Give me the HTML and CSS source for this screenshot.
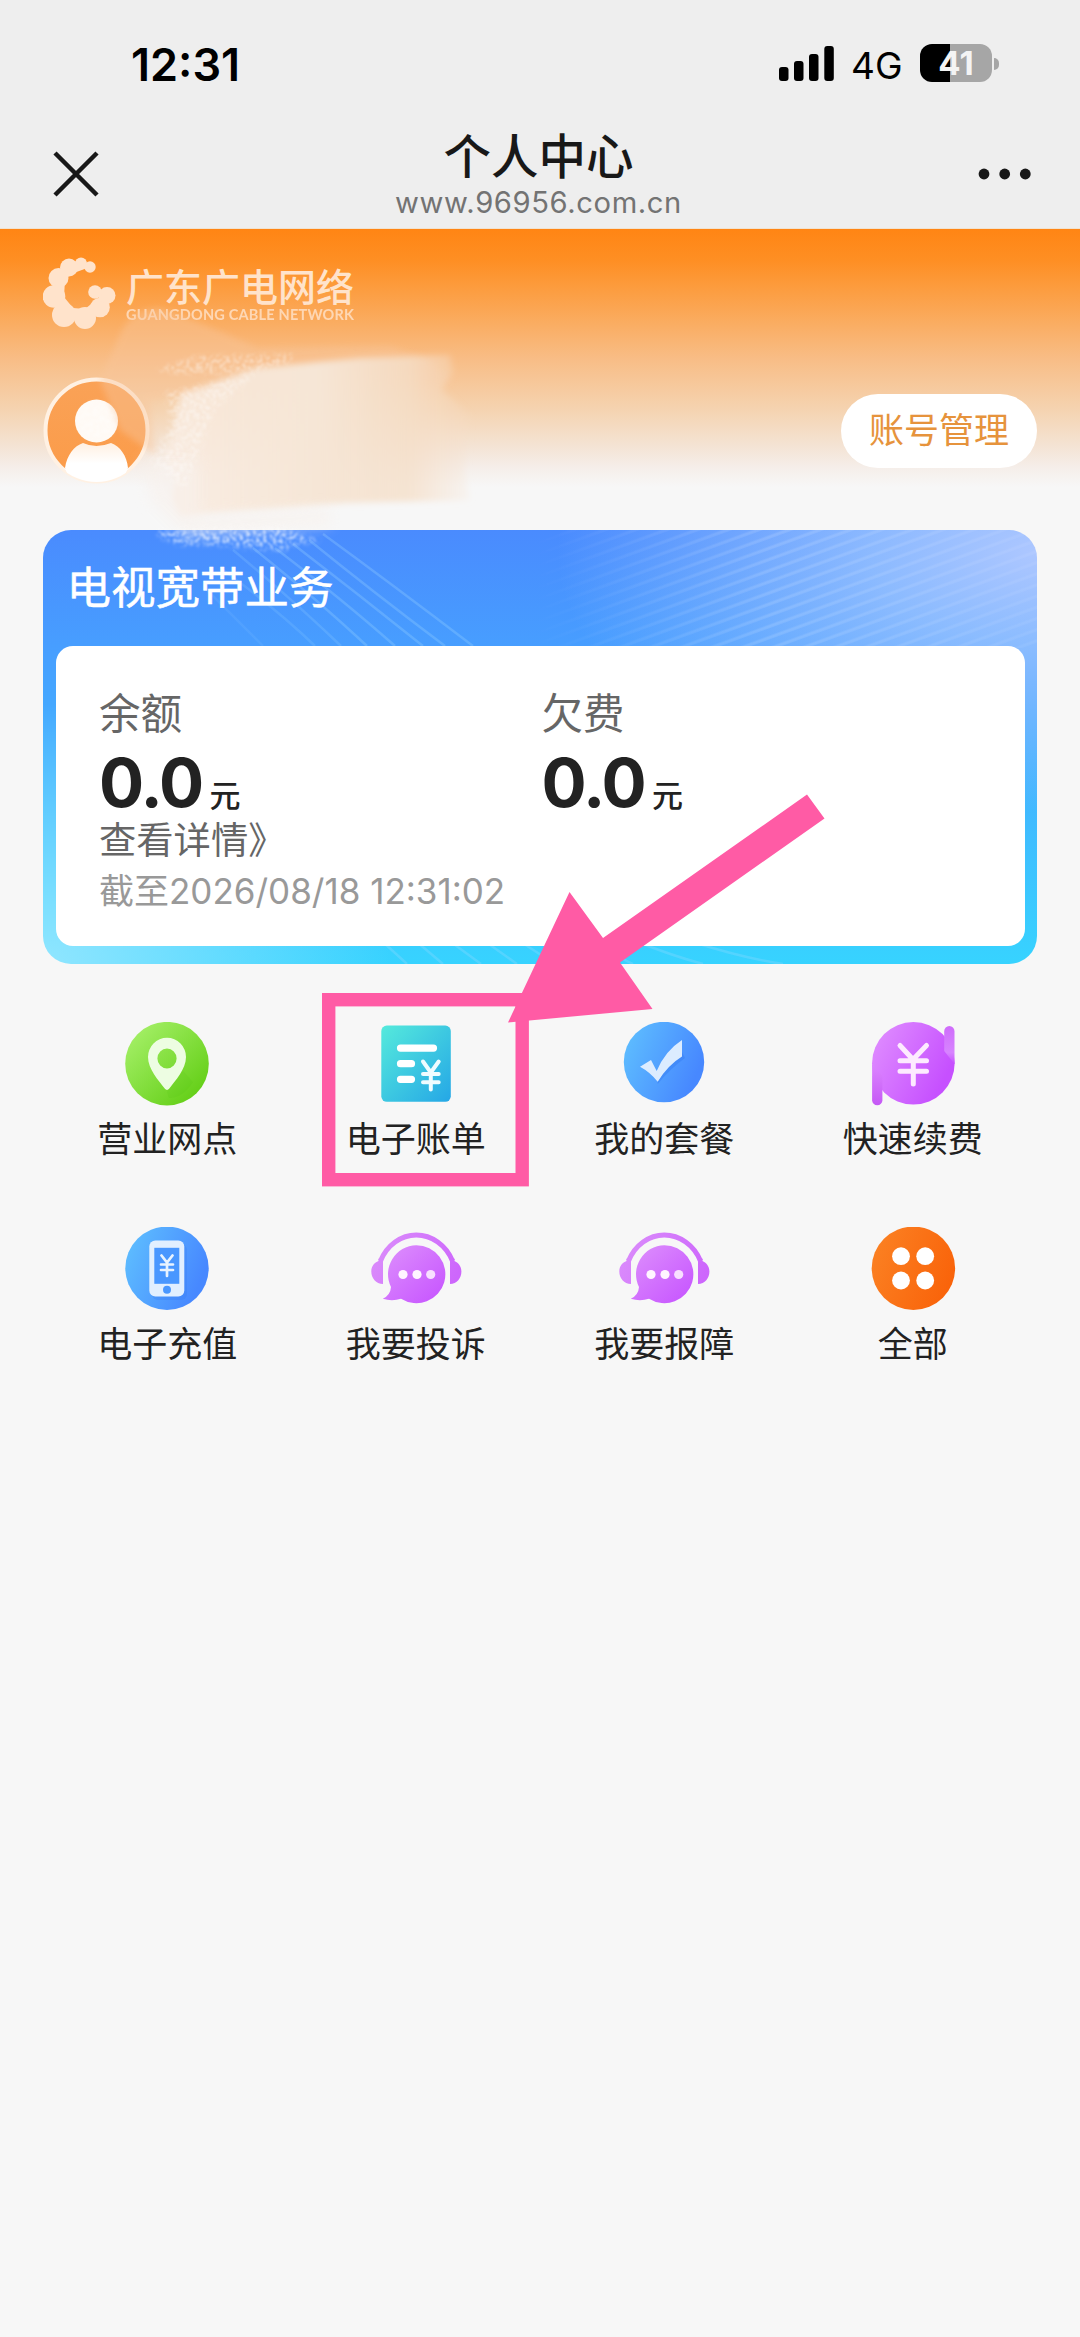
FILE: index.html
```html
<!DOCTYPE html>
<html lang="zh-CN">
<head>
<meta charset="utf-8">
<title>个人中心</title>
<link rel="stylesheet" href="styles.css">
</head>
<body>
<header class="chrome">
  <div class="status">
    <span class="clock">12:31</span>
    <div class="status-right">
      <svg class="signal" width="56" height="36" viewBox="0 0 56 36">
        <rect x="0" y="21" width="9.5" height="14" rx="3"/><rect x="15" y="15" width="9.5" height="20" rx="3"/><rect x="30" y="8" width="9.5" height="27" rx="3"/><rect x="45.3" y="0" width="9.5" height="35" rx="3"/>
      </svg>
      <span class="net">4G</span>
      <div class="battery"><span>41</span></div>
      <i class="nub"></i>
    </div>
  </div>
  <div class="navbar">
    <svg class="close" width="46" height="46" viewBox="0 0 46 46"><path d="M2 2L44 44M44 2L2 44"/></svg>
    <div class="heading">
      <h1>个人中心</h1>
      <p>www.96956.com.cn</p>
    </div>
    <svg class="more" width="54" height="12" viewBox="0 0 54 12"><circle cx="6" cy="6" r="5.4"/><circle cx="26.7" cy="6" r="5.4"/><circle cx="47.3" cy="6" r="5.4"/></svg>
  </div>
</header>

<section class="hero">
  <div class="brand">
    <svg width="73" height="73" viewBox="0 0 73 73" fill="#ffe3cb">
      <circle cx="47" cy="10" r="5.7"/><circle cx="38" cy="6.5" r="6"/><circle cx="26" cy="10.5" r="9"/><circle cx="15.500" cy="21" r="10"/><circle cx="11" cy="39.500" r="11.300"/><circle cx="21" cy="58" r="12"/><circle cx="42" cy="61" r="11"/><circle cx="57" cy="50.500" r="9.800"/><circle cx="64" cy="38.500" r="8.500"/><circle cx="52" cy="35" r="6.800"/>
      <path d="M26 10L38 6L47 10L28 17L22 23L21 40L30 51L42 52L53 43L58 48L45 62H24L12 40L16 22Z"/>
    </svg>
    <div class="brand-text"><b>广东广电网络</b><small>GUANGDONG CABLE NETWORK</small></div>
  </div>
  <div class="account">
    <svg class="avatar" width="107" height="107" viewBox="0 0 107 107">
      <defs>
        <linearGradient id="av" x1="0" y1="0" x2="0" y2="1"><stop offset="0" stop-color="#faa257"/><stop offset="1" stop-color="#fb9b48"/></linearGradient>
        <linearGradient id="body" x1="0" y1="0" x2="0" y2="1"><stop offset="0" stop-color="#fff0e2"/><stop offset=".5" stop-color="#fff"/></linearGradient>
        <clipPath id="avc"><circle cx="53.500" cy="53.500" r="51.500"/></clipPath>
      </defs>
      <circle cx="53.500" cy="53.500" r="51" fill="url(#av)" stroke="#fff1e3" stroke-width="4"/>
      <g clip-path="url(#avc)"><path d="M22 91C24 78 31 69 40 66Q53 72 68 66C77 69 84 79 85 91L78 107H28Z" fill="url(#body)"/></g>
      <path d="M19 90Q53.500 114 88 90A51 51 0 0 1 19 90Z" fill="#fff"/>
      <circle cx="53.500" cy="44" r="21.500" fill="#fffaf5"/>
    </svg>
    <a class="manage">账号管理</a>
  </div>
</section>

<section class="card">
  <svg class="card-lines" viewBox="0 0 994 434" preserveAspectRatio="none">
    <defs>
      <linearGradient id="fade" x1="0" x2="1"><stop offset=".05" stop-color="#000"/><stop offset=".5" stop-color="#fff"/><stop offset=".97" stop-color="#777"/></linearGradient>
      <mask id="m"><rect x="460" width="534" height="118" fill="url(#fade)"/></mask>
      <pattern id="rays" width="300" height="10.500" patternUnits="userSpaceOnUse" patternTransform="rotate(-20)"><path d="M0 3H300" stroke="#fff" stroke-opacity=".14" stroke-width="3"/></pattern>
    </defs>
    <rect x="460" width="534" height="118" fill="url(#rays)" mask="url(#m)"/>
    <g fill="none" stroke="#a7dcff" stroke-opacity=".26" stroke-width="2.500">
      <path d="M280 4Q350 55 430 116"/><path d="M266 10Q330 62 402 116"/><path d="M250 14Q315 64 380 116"/><path d="M232 18Q300 70 352 116"/><path d="M210 18Q275 70 324 116"/><path d="M190 20Q250 70 298 116" opacity=".7"/><path d="M180 40Q235 80 272 116" opacity=".6"/><path d="M164 60L220 116" opacity=".4"/>
      <path d="M340 412L364 434M374 412L400 434M408 412L438 434M443 412L474 434M478 412L512 434M513 412L550 434M545 412L590 434M595 412Q630 426 660 434M650 412Q700 428 740 434"/>
    </g>
  </svg>
  <h2>电视宽带业务</h2>
  <div class="panel">
    <div class="col">
      <div class="label">余额</div>
      <div class="amount">0.0<span>元</span></div>
      <a class="detail">查看详情》</a>
      <div class="asof">截至<span>2026/08/18 12:31:02</span></div>
    </div>
    <div class="col">
      <div class="label">欠费</div>
      <div class="amount">0.0<span>元</span></div>
    </div>
  </div>
</section>

<svg width="0" height="0" class="defs">
  <defs>
    <linearGradient id="green" x1="0" y1="0" x2="1" y2="1"><stop offset=".1" stop-color="#a4ef66"/><stop offset=".85" stop-color="#66d01a"/></linearGradient>
    <linearGradient id="teal" x1="0" y1="0" x2="1" y2="1"><stop stop-color="#55eadc"/><stop offset="1" stop-color="#25a7e6"/></linearGradient>
    <linearGradient id="blue" x1="0" y1=".3" x2="1" y2=".7"><stop stop-color="#5dbcff"/><stop offset=".9" stop-color="#4788ff"/></linearGradient>
    <linearGradient id="purple" x1="0" y1=".2" x2="1" y2=".7"><stop stop-color="#df8cff"/><stop offset=".9" stop-color="#c650ff"/></linearGradient>
    <linearGradient id="barR" x1="0" y1="0" x2="0" y2="1"><stop stop-color="#cf6cfb"/><stop offset=".7" stop-color="#d784ff"/><stop offset="1" stop-color="#c650ff"/></linearGradient>
    <linearGradient id="barL" x1="0" y1="0" x2="0" y2="1"><stop stop-color="#dc86ff"/><stop offset="1" stop-color="#c558f5"/></linearGradient>
    <linearGradient id="orange" x1="0" y1=".3" x2="1" y2=".7"><stop stop-color="#fb8022"/><stop offset="1" stop-color="#f96209"/></linearGradient>
    <linearGradient id="bubble" x1="0" y1="0" x2="1" y2="1"><stop stop-color="#de91fc"/><stop offset=".9" stop-color="#c858ff"/></linearGradient>
    <linearGradient id="band" gradientUnits="userSpaceOnUse" x1="5" y1="0" x2="95" y2="40"><stop stop-color="#dc91fb"/><stop offset="1" stop-color="#cd66fc"/></linearGradient>
    <symbol id="headset" viewBox="0 0 100 84">
      <path d="M14.500 34C21 18 35 8 50.300 8S80 18 86.500 34" fill="none" stroke="url(#band)" stroke-width="5"/>
      <path d="M12.500 31.500L17 34V57C10 57 5.300 51 5.300 44.500C5.300 39 8.500 35.500 12.500 34ZM88.500 31.500L84 34V57C91 57 95.400 51 95.400 44.500C95.400 39 92 35.500 88.500 34Z" fill="url(#band)"/>
      <path d="M50.300 18.200A29 29 0 1 1 35 71.800Q26 74.500 16.800 71.800Q24.500 68 25 60A29 29 0 0 1 50.300 18.200Z" fill="url(#bubble)"/>
      <g fill="#fff5ff"><circle cx="37" cy="47.500" r="4.600"/><circle cx="51" cy="47.500" r="4.600"/><circle cx="64.700" cy="47.500" r="4.600" opacity=".85"/></g>
    </symbol>
  </defs>
</svg>

<nav class="menu">
  <a class="item"><svg viewBox="0 0 100 84"><circle cx="50" cy="41.700" r="41.800" fill="url(#green)"/><path d="M50 70L66 49L76 60Q66 76 52 76Z" fill="#43b60c" opacity=".1"/><path fill-rule="evenodd" d="M50 15.800A19 19 0 0 1 69 35C69 47 58 59 52.300 66.500Q50 69.300 47.700 66.500C42 59 31 47 31 35A19 19 0 0 1 50 15.800ZM50 26.500A9.600 10 0 1 0 50 46.500A9.600 10 0 1 0 50 26.500Z" fill="#edfde2"/></svg><span>营业网点</span></a>
  <a class="item"><svg viewBox="0 0 100 84"><rect x="15.300" y="3.600" width="69.500" height="76.200" rx="5.500" fill="url(#teal)"/><path d="M34.500 26.100H67.500M34.500 41.700H45.500M34.500 57.300H45.500" stroke="#fff" stroke-width="7.200" stroke-linecap="round"/><path d="M57 39.500L64.800 50.500L72.700 39.500M64.800 50V67.500M57 52H72.700M57 60.300H72.700" fill="none" stroke="#effcff" stroke-width="4" stroke-linecap="round"/></svg><span>电子账单</span></a>
  <a class="item"><svg viewBox="0 0 100 84"><circle cx="50" cy="40" r="40.200" fill="url(#blue)"/><path d="M43.700 62Q56 47 71 36L67 28L43 55Z" fill="#3278f0" opacity=".4"/><path d="M26 44.700L37 38L42.700 49Q51 29 68 18V34.500Q54 43 43.700 59.700Q36 50 26 44.700Z" fill="#dcecff"/></svg><span>我的套餐</span></a>
  <a class="item"><svg viewBox="0 0 100 84"><circle cx="50.350" cy="41.300" r="41.300" fill="url(#purple)"/><path d="M81.200 9.200a5.150 5.150 0 0 1 10.300 0V42L81.200 29Z" fill="url(#barR)"/><path d="M19.400 78.200a5.150 5.150 0 0 1-10.300 0V42L19.400 54Z" fill="url(#barL)"/><path d="M37 23.500L50 37.500L63.500 23.500M50.300 37V62M37 38.700H63.500M37 49.300H63.500" fill="none" stroke="#fdeaff" stroke-width="5" stroke-linecap="round"/></svg><span>快速续费</span></a>
  <a class="item"><svg viewBox="0 0 100 84"><circle cx="50" cy="41.300" r="41.700" fill="url(#blue)"/><rect x="35" y="17" width="35" height="56" rx="6" fill="#3478f0" opacity=".25"/><rect x="32.300" y="13.500" width="35" height="56" rx="6" fill="#e1efff"/><rect x="37.300" y="20.800" width="25" height="36" fill="#4997ff"/><circle cx="50" cy="62.800" r="4" fill="#4997ff"/><path d="M44.500 28.500L50 35.500L55.500 28.500M50 35V49M44 37.500H56M44 43H56" fill="none" stroke="#e8f3ff" stroke-width="2.700" stroke-linecap="round"/></svg><span>电子充值</span></a>
  <a class="item"><svg viewBox="0 0 100 84"><use href="#headset"/></svg><span>我要投诉</span></a>
  <a class="item"><svg viewBox="0 0 100 84"><use href="#headset"/></svg><span>我要报障</span></a>
  <a class="item"><svg viewBox="0 0 100 84"><circle cx="50.400" cy="41.300" r="41.700" fill="url(#orange)"/><g fill="#fff"><circle cx="38" cy="29.200" r="8.900"/><circle cx="62.200" cy="29.200" r="8.900"/><circle cx="38" cy="53.500" r="8.900"/><circle cx="62.200" cy="53.500" r="8.900"/></g></svg><span>全部</span></a>
</nav>

<svg class="overlay" viewBox="0 0 1080 2337">
  <defs>
    <filter id="soft" x="-10%" y="-10%" width="120%" height="120%"><feGaussianBlur stdDeviation="3"/></filter>
    <filter id="softer" x="-15%" y="-15%" width="130%" height="130%"><feGaussianBlur stdDeviation="7"/></filter>
    <filter id="chalk" x="-5%" y="-20%" width="110%" height="140%"><feTurbulence type="fractalNoise" baseFrequency=".3" numOctaves="3" seed="8" result="n"/><feColorMatrix in="n" values="0 0 0 0 1 0 0 0 0 1 0 0 0 0 1 0 0 0 7 -3.300" result="a"/><feGaussianBlur in="SourceGraphic" stdDeviation="2.500" result="s"/><feComposite in="a" in2="s" operator="in" result="c"/><feGaussianBlur in="c" stdDeviation=".8"/></filter>
    <linearGradient id="smear" x1="0" x2="1"><stop stop-color="#f9ebdf" stop-opacity=".85"/><stop offset=".5" stop-color="#f6e6d6"/><stop offset=".8" stop-color="#f5dfc9" stop-opacity=".8"/><stop offset="1" stop-color="#f6dfca" stop-opacity=".15"/></linearGradient>
  </defs>
  <path d="M122 330Q135 308 160 308Q200 322 258 348L390 346L420 356L455 382L250 385L150 400L155 455L120 430L100 380Z" fill="#f8c69c" opacity=".42" filter="url(#soft)"/>
  <path d="M255 368L360 358L450 355L453 372L442 390L470 415L465 470L470 500L345 503L180 516L172 500L175 480L165 455L175 425L180 395Z" fill="url(#smear)" filter="url(#soft)"/>
  <path d="M142 460L200 460V515L330 508V525L185 535L150 500Z" fill="#f8f1ec" opacity=".6" filter="url(#softer)"/>
  <path d="M155 370L195 356L295 354L290 362L250 373L180 374ZM165 392L255 374L215 410L200 450L185 490L150 462L170 425Z" fill="#fff" opacity=".4" filter="url(#chalk)"/>
  <circle cx="97" cy="421" r="19" fill="#fff" opacity=".4" filter="url(#chalk)"/>
  <path d="M157 531L178 530L280 528L321 541L290 545L285 551L220 545L182 545L160 537Z" fill="#fff" opacity=".65" filter="url(#chalk)"/>
  <rect x="328.700" y="999.700" width="193.500" height="180" fill="none" stroke="#ff5ba5" stroke-width="13.400"/>
  <path d="M508 1022.500L569.500 892L603 938L807 794.500L824.500 818.500L620 962.500L652.500 1009Z" fill="#ff5ba5"/>
</svg>
</body>
</html>
```
FILE: styles.css
```css
* { box-sizing: border-box; margin: 0; padding: 0; }
body { position: relative; height: 2337px; overflow: hidden; background: #f7f7f7; font-family: Inter, "Noto Sans CJK SC", sans-serif; color: #222; }
svg { display: block; flex: none; }
.defs { height: 0; }

.chrome { height: 229px; background: #eee; border-bottom: 1px solid #f1e2cf; }
.status { display: flex; justify-content: space-between; height: 130px; padding: 0 81px 0 131px; }
.clock { font-size: 45px; font-weight: 600; line-height: 54px; margin-top: 38px; color: #000; letter-spacing: 0; }
.status-right { display: flex; align-items: flex-start; }
.signal { margin: 46px 16px 0 0; }
.net { font-size: 37px; font-weight: 400; line-height: 46px; width: 69px; margin-top: 43px; color: #000; white-space: nowrap; }
.battery { width: 72px; height: 38px; margin-top: 44px; border-radius: 12px; background: linear-gradient(90deg, #000 30px, #a6a6a6 30px); color: #f4f4f4; text-align: center; font-size: 33px; font-weight: 700; line-height: 39px; }
.nub { width: 5px; height: 12px; margin: 58px 0 0 2px; border-radius: 0 6px 6px 0; background: #a6a6a6; }
.navbar { display: flex; justify-content: space-between; padding: 0 48px 0 53px; }
.close { margin-top: 21px; stroke: #181818; stroke-width: 4.5; }
.heading { text-align: center; width: 300px; }
.heading h1 { font-size: 47.5px; font-weight: 500; line-height: 54px; color: #181818; white-space: nowrap; }
.heading p { font-size: 29.2px; line-height: 38px; color: #737373; letter-spacing: .6px; white-space: nowrap; }
.more { margin-top: 38px; fill: #181818; }

.hero { height: 301px; padding: 28px 43px 0; background: linear-gradient(#ff8514 0, #fe8f24 32px, #fba653 80px, #f8bd86 130px, #f5d3b0 180px, #f4e3d3 216px, #f5eee9 238px, #f7f7f7 258px); }
.brand { display: flex; gap: 10px; height: 120px; }
.brand-text { display: flex; flex-direction: column; color: #ffe3cb; }
.brand-text b { font-size: 38px; font-weight: 500; line-height: 40px; margin-top: 10px; white-space: nowrap; }
.brand-text small { font-family: Lato, sans-serif; font-size: 14.5px; font-weight: 700; line-height: 16px; opacity: .8; white-space: nowrap; letter-spacing: .2px; }
.account { display: flex; justify-content: space-between; align-items: center; }
.manage { width: 196px; height: 74px; border-radius: 37px; background: #fff; color: #e6933c; text-align: center; font-size: 35px; line-height: 72px; }

.card { position: relative; width: 994px; height: 434px; margin: 0 auto; padding: 0 12.5px 0 13px; border-radius: 28px; overflow: hidden; background: radial-gradient(ellipse 480px 260px at 100% 5%, #adc7ff 0, #9cc4ffcc 35%, #7cb5ff00 100%), radial-gradient(ellipse 350px 260px at 0 100%, #90e6ff 0, #8ce3ff00 100%), linear-gradient(#4a8bfe 0, #479eff 27%, #41b6ff 60%, #37d3ff 100%); }
.card-lines { position: absolute; inset: 0; width: 994px; height: 434px; }
.card h2 { position: relative; height: 116px; padding: 24.5px 0 0 10.5px; font-size: 44.5px; font-weight: 400; line-height: 66px; color: #fff; -webkit-text-stroke: .5px #fff; }
.panel { position: relative; display: grid; grid-template-columns: 442.5px 1fr; height: 300px; padding: 41px 0 0 43px; border-radius: 17px; background: #fff; }
.label { font-size: 41.5px; line-height: 54px; color: #666; }
.amount { font-size: 67px; font-weight: 700; line-height: 78px; margin-top: 3px; height: 72px; letter-spacing: -1.8px; white-space: nowrap; }
.amount span { font-size: 31px; margin-left: 7px; font-weight: 500; letter-spacing: 0; }
.detail { display: block; font-size: 37.3px; line-height: 50px; color: #666; white-space: nowrap; }
.asof { font-size: 35px; line-height: 50px; color: #999; white-space: nowrap; }

.menu { display: grid; grid-template-columns: repeat(4, 248.5px); grid-auto-rows: 205px; width: 994px; margin: 58px auto 0; }
.item { display: flex; flex-direction: column; align-items: center; }
.item svg { width: 100px; height: 84px; }
.item span { font-size: 35px; line-height: 50px; margin-top: 8px; }
.overlay { position: absolute; left: 0; top: 0; width: 1080px; height: 2337px; pointer-events: none; }
```
